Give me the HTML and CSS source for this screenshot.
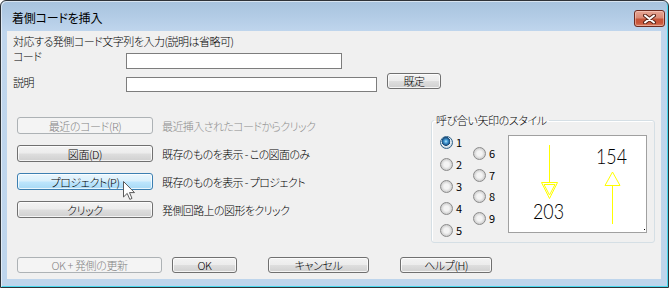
FILE: index.html
```html
<!DOCTYPE html>
<html lang="ja">
<head>
<meta charset="utf-8">
<title>着側コードを挿入</title>
<link rel="stylesheet" href="styles.css">
</head>
<body>
<div class="window">
  <div class="titlebar">
    <span class="title">着側コードを挿入</span>
    <button class="close" aria-label="閉じる">
      <svg width="13" height="10" viewBox="0 0 13 10">
        <path d="M2 1.5 L11 8.5 M11 1.5 L2 8.5" stroke="#5a2418" stroke-width="4" stroke-linecap="round"/>
        <path d="M2 1.5 L11 8.5 M11 1.5 L2 8.5" stroke="#ffffff" stroke-width="2" stroke-linecap="round"/>
      </svg>
    </button>
  </div>
  <div class="client">
    <div class="hint">対応する発側コード文字列を入力(説明は省略可)</div>
    <div class="row row-code">
      <label class="lbl lbl-code">コード</label>
      <input class="txt txt-code" type="text">
    </div>
    <div class="row row-desc">
      <label class="lbl lbl-desc">説明</label>
      <input class="txt txt-desc" type="text">
      <button class="btn btn-default">既定</button>
    </div>
    <div class="middle">
      <div class="actions">
        <div class="action">
          <button class="btn btn-action" disabled>最近のコード(R)</button>
          <span class="desc desc-disabled">最近挿入されたコードからクリック</span>
        </div>
        <div class="action">
          <button class="btn btn-action">図面(D)</button>
          <span class="desc">既存のものを表示 - この図面のみ</span>
        </div>
        <div class="action">
          <button class="btn btn-action btn-hot">プロジェクト(P)</button>
          <span class="desc">既存のものを表示 - プロジェクト</span>
        </div>
        <div class="action">
          <button class="btn btn-action">クリック</button>
          <span class="desc">発側回路上の図形をクリック</span>
        </div>
      </div>
      <fieldset class="group">
        <legend class="group-title">呼び合い矢印のスタイル</legend>
        <div class="group-body">
          <div class="radios col1">
            <div class="radio-row"><span class="radio checked"></span><span class="rlabel">1</span></div>
            <div class="radio-row"><span class="radio"></span><span class="rlabel">2</span></div>
            <div class="radio-row"><span class="radio"></span><span class="rlabel">3</span></div>
            <div class="radio-row"><span class="radio"></span><span class="rlabel">4</span></div>
            <div class="radio-row"><span class="radio"></span><span class="rlabel">5</span></div>
          </div>
          <div class="radios col2">
            <div class="radio-row"><span class="radio"></span><span class="rlabel">6</span></div>
            <div class="radio-row"><span class="radio"></span><span class="rlabel">7</span></div>
            <div class="radio-row"><span class="radio"></span><span class="rlabel">8</span></div>
            <div class="radio-row"><span class="radio"></span><span class="rlabel">9</span></div>
          </div>
          <div class="preview">
            <svg width="137" height="96" viewBox="0 0 137 96">
              <rect x="40" y="9" width="1" height="37" fill="#ffff00"/>
              <rect x="103" y="50" width="1" height="38" fill="#ffff00"/>
              <g stroke="#ffff00" stroke-width="1" fill="none">
                <polygon points="32.5,46.5 48.5,46.5 40.5,62.5"/>
                <polygon points="35,48.5 46,48.5 40.5,59"/>
                <polygon points="103.5,36 96,49.5 111,49.5"/>
              </g>
              <text x="24" y="83" class="num" textLength="31" lengthAdjust="spacingAndGlyphs">203</text>
              <text x="87" y="28" class="num" textLength="31" lengthAdjust="spacingAndGlyphs">154</text>
              <rect x="135" y="93" width="1" height="1" fill="#000"/>
            </svg>
          </div>
        </div>
      </fieldset>
    </div>
    <div class="footer">
      <button class="btn btn-okupd" disabled>OK + 発側の更新</button>
      <button class="btn btn-ok">OK</button>
      <button class="btn btn-cancel">キャンセル</button>
      <button class="btn btn-help">ヘルプ(H)</button>
    </div>
  </div>
  <svg class="cursor" width="13" height="20" viewBox="0 0 13 20">
    <path d="M0.5 0.5 L0.5 16 L4.2 12.4 L6.8 18.4 L9 17.4 L6.5 11.6 L11.5 11.6 Z" fill="#ffffff" stroke="#5a5a5a" stroke-width="1" stroke-linejoin="miter"/>
  </svg>
</div>
</body>
</html>
```

FILE: styles.css
```css
* { box-sizing: border-box; }

html, body {
  margin: 0;
  padding: 0;
  background: #ffffff;
}

body {
  font-family: "Noto Sans CJK JP", "Noto Sans", sans-serif;
  font-size: 11px;
  font-weight: 300;
  font-feature-settings: "palt";
  color: #000;
}

.window {
  position: relative;
  width: 669px;
  height: 288px;
  border: 1px solid #2e3338;
  border-radius: 6px 6px 0 0;
  padding: 0 7px 8px 6px;
  background: linear-gradient(to bottom, #a7c3de 0px, #b3cce6 16px, #c0d6ed 31px, #bed5ec 100%);
  box-shadow: inset 1px 1px 0 rgba(255,255,255,0.55), inset -1px -1px 0 #49d8ee;
  display: flex;
  flex-direction: column;
}

.titlebar {
  height: 30px;
  display: flex;
  align-items: flex-start;
  margin-right: -4px;
}

.title {
  font-size: 12px;
  line-height: 14px;
  font-weight: 400;
  letter-spacing: -0.2px;
  margin: 10px 0 0 5px;
  color: #000;
}

.close {
  margin: 9px 0 0 auto;
  width: 31px;
  height: 17px;
  padding: 0;
  border: 1px solid #6d2a1f;
  border-radius: 3px;
  background: linear-gradient(to bottom, #e8a795 0%, #d98a76 45%, #c65539 55%, #c9563a 80%, #d98264 100%);
  box-shadow: inset 0 0 0 1px rgba(255,220,210,0.45);
  display: flex;
  align-items: center;
  justify-content: center;
}

.close svg { display: block; }

.client {
  width: 654px;
  height: 248px;
  background: #f0f0f0;
  display: flex;
  flex-direction: column;
}

.hint {
  margin: 4px 0 0 6px;
  height: 12px;
  line-height: 12px;
  letter-spacing: -0.5px;
}

.row {
  display: flex;
  align-items: flex-start;
}

.row-code {
  margin-top: 6px;
  height: 16px;
}

.row-desc {
  margin-top: 4px;
  height: 20px;
}

.lbl {
  width: 113px;
  margin-left: 6px;
  line-height: 12px;
  height: 12px;
  letter-spacing: -0.5px;
}

.lbl-code { margin-top: -3px; }
.lbl-desc { margin-top: 3px; }

.txt {
  height: 16px;
  border: 1px solid #7d7d7d;
  background: #fff;
  padding: 0 2px;
  margin: 0;
  font: inherit;
  outline: none;
}

.txt-code { width: 216px; }
.txt-desc { width: 251px; height: 15px; margin-top: 4px; }

.btn {
  height: 16px;
  padding: 0;
  margin: 0;
  border: 1px solid #707070;
  border-radius: 3px;
  background: linear-gradient(to bottom, #f3f3f3 0%, #ececec 48%, #dedede 52%, #d0d0d0 100%);
  box-shadow: inset 0 0 0 1px rgba(255,255,255,0.75);
  font-family: inherit;
  font-size: 11px;
  font-weight: 300;
  font-feature-settings: "palt";
  line-height: 12px;
  letter-spacing: -0.4px;
  color: #000;
  text-align: center;
}

.btn:disabled {
  border-color: #adb2b5;
  background: #f4f4f4;
  box-shadow: none;
  color: #838383;
}

.btn-hot {
  border-color: #3c7fb1;
  background: linear-gradient(to bottom, #eaf6fd 0%, #d9f0fc 48%, #bee6fd 52%, #a7d9f5 100%);
}

.btn-default {
  width: 54px;
  margin-left: 10px;
}

.middle {
  display: flex;
  align-items: flex-start;
}

.actions {
  margin: 24px 0 0 10px;
  display: flex;
  flex-direction: column;
  gap: 11px;
}

.action {
  display: flex;
  align-items: center;
  height: 17px;
}

.btn-action {
  width: 136px;
  height: 17px;
}

.desc {
  margin-left: 9px;
  letter-spacing: -0.6px;
  line-height: 12px;
}

.desc-disabled { color: #8d8d8d; }

.group {
  margin: 21px 6px 0 auto;
  width: 224px;
  padding: 0;
  border: 1px solid #d5dfe5;
  border-radius: 3px;
  box-shadow: inset 1px 1px 0 #fff;
  min-inline-size: 0;
}

.group-title {
  padding: 0 2px;
  margin-left: 2px;
  line-height: 12px;
  height: 12px;
  letter-spacing: -0.4px;
}

.group-body {
  height: 116px;
  padding: 9px 7px 0 8px;
  display: flex;
  align-items: flex-start;
}

.radios {
  display: flex;
  flex-direction: column;
}

.col1 { width: 33px; margin-top: 1px; }
.col2 { width: 34px; margin-top: 12px; }
.col2 .radio-row { height: 21.7px; }

.radio-row {
  height: 22px;
  display: flex;
  align-items: flex-start;
}

.radio {
  width: 13px;
  height: 13px;
  border-radius: 50%;
  border: 1px solid #8b8b8b;
  background: radial-gradient(circle at 50% 50%, #f4f4f4 0, #f4f4f4 2.5px, #cfcfcf 5.5px, #e9e9e9 6.5px);
  flex: none;
}

.radio.checked {
  border-color: #2c628b;
  background: radial-gradient(circle at 45% 40%, #bfe6fb 0, #4fa6dd 1.5px, #1c5d96 3.5px, #24496b 4.2px, #e4eef5 4.6px, #c8d4dc 6.5px);
}

.rlabel {
  margin-left: 3px;
  line-height: 12px;
  font-size: 11px;
  font-weight: 400;
}

.preview {
  width: 139px;
  height: 98px;
  border: 1px solid #a0a0a0;
  background: #fff;
  margin-left: auto;
}

.preview svg { display: block; }

.num {
  font-family: "Lato", "Liberation Sans", sans-serif;
  font-weight: 300;
  font-size: 21px;
  fill: #000;
}

.footer {
  margin: 14px 0 0 10px;
  display: flex;
  align-items: flex-start;
}

.btn-okupd { width: 145px; }
.btn-ok { width: 65px; margin-left: 10px; }
.btn-cancel { width: 101px; margin-left: 31px; }
.btn-help { width: 92px; margin-left: 31px; }

.cursor {
  position: absolute;
  left: 122px;
  top: 180px;
  pointer-events: none;
}
```
